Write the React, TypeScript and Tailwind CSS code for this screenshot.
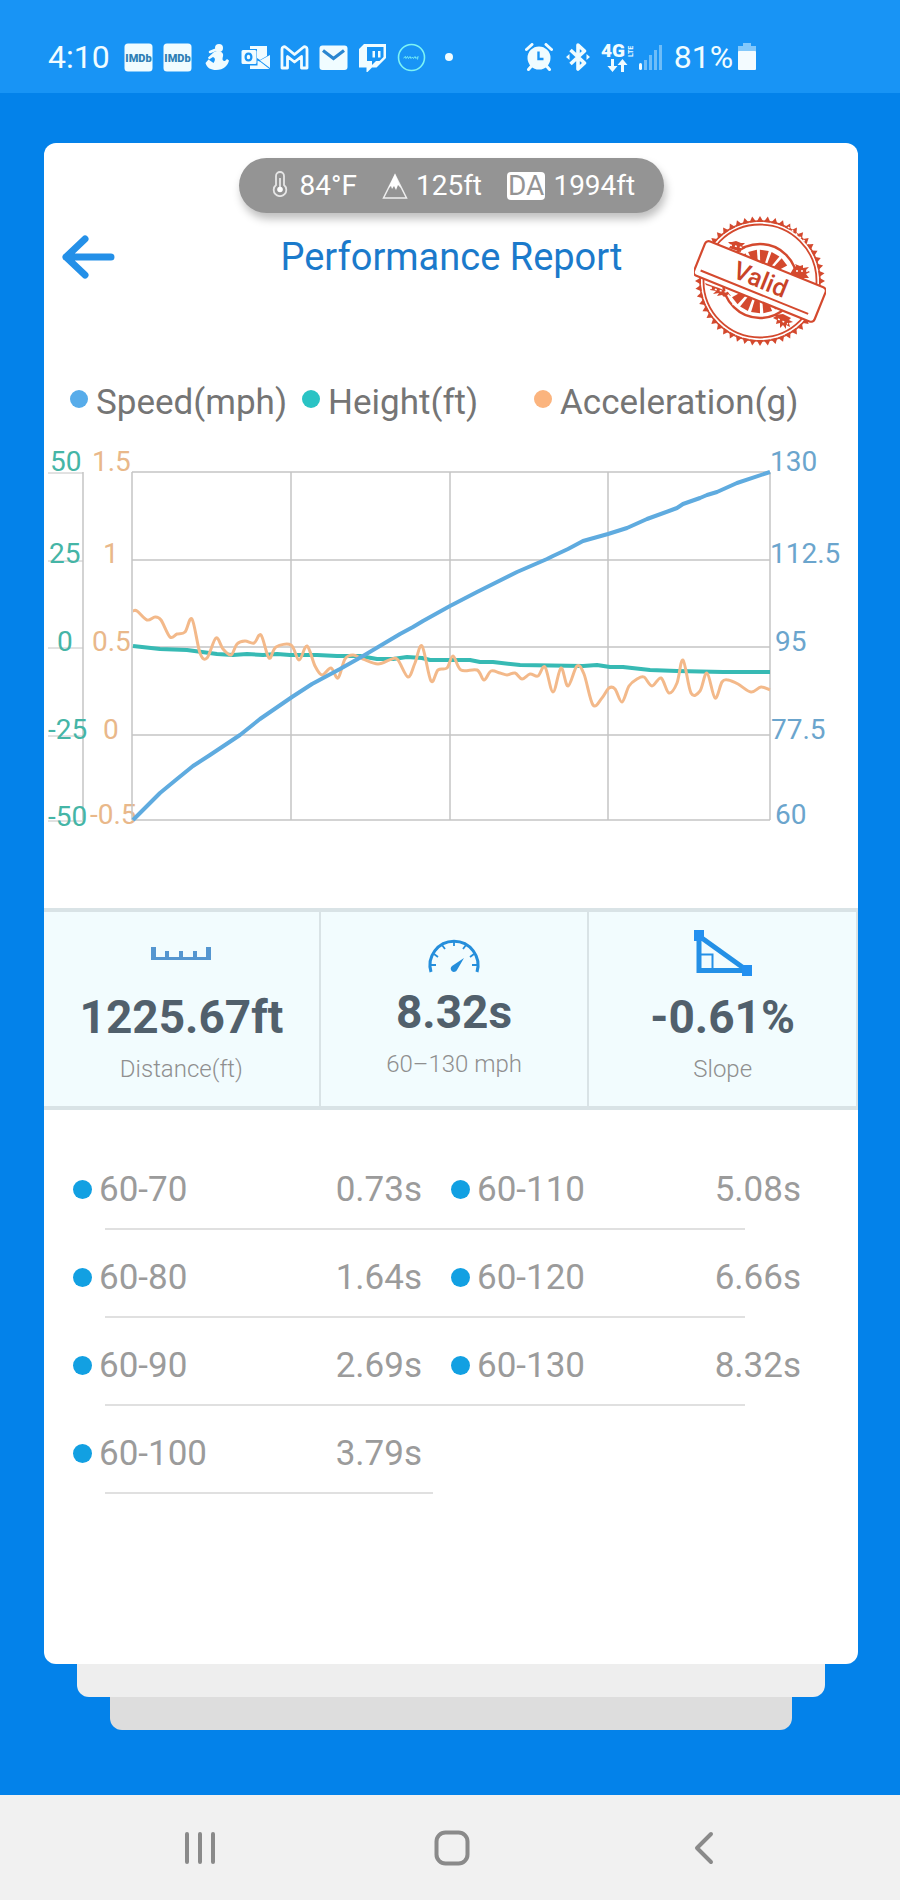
import type { ReactNode } from "react";

type Point = [number, number];

// Plot area is 638 x 348, all series are in plot coordinates
const speed: Point[] = [
  [1, 348], [28, 321], [45, 307], [61, 294], [78, 283], [108, 263], [128, 247], [160, 225],
  [180, 212], [208, 197], [231, 184], [268, 162], [281, 155], [291, 149], [318, 134], [345, 120],
  [385, 100], [415, 87], [421, 84], [436, 77], [451, 69], [476, 62], [495, 56], [515, 47],
  [545, 36], [551, 32], [568, 26], [575, 23], [585, 20], [605, 11], [638, 0],
];

const height: Point[] = [
  [1, 174], [28, 177], [55, 178], [85, 182], [101, 183], [115, 182], [131, 183], [145, 182],
  [158, 183], [185, 183], [205, 184], [228, 184], [245, 187], [261, 187], [275, 185], [290, 186],
  [298, 188], [338, 188], [348, 190], [361, 190], [388, 193], [451, 194], [465, 193], [478, 195],
  [491, 195], [518, 198], [545, 199], [591, 200], [638, 200],
];

const acceleration: Point[] = [
  [1, 139], [5, 139], [15, 148], [23, 145], [29, 148], [38, 165], [45, 162], [53, 160],
  [60, 147], [68, 181], [75, 186], [84, 166], [91, 177], [99, 183], [105, 172], [113, 169],
  [122, 171], [129, 163], [137, 186], [144, 175], [159, 173], [167, 188], [175, 174], [183, 194],
  [190, 203], [199, 196], [206, 206], [213, 187], [221, 183], [231, 187], [246, 192], [260, 187],
  [266, 188], [276, 205], [283, 191], [290, 174], [299, 209], [306, 198], [315, 196], [321, 184],
  [329, 198], [345, 198], [352, 208], [359, 199], [368, 201], [375, 203], [383, 201], [390, 207],
  [398, 202], [406, 204], [413, 195], [421, 220], [429, 196], [436, 214], [445, 194], [452, 202],
  [461, 233], [470, 226], [477, 216], [483, 217], [490, 230], [497, 214], [505, 207], [512, 205],
  [520, 214], [529, 206], [537, 221], [545, 211], [551, 188], [559, 221], [568, 219], [575, 201],
  [583, 226], [590, 210], [596, 208], [606, 212], [619, 220], [629, 215], [638, 218],
];

function smoothPath(points: Point[]) {
  let d = `M${points[0][0]} ${points[0][1]}`;
  for (let i = 0; i < points.length - 1; i++) {
    const p0 = points[i - 1] ?? points[i];
    const p1 = points[i];
    const p2 = points[i + 1];
    const p3 = points[i + 2] ?? p2;
    d += `C${p1[0] + (p2[0] - p0[0]) / 6} ${p1[1] + (p2[1] - p0[1]) / 6} ${
      p2[0] - (p3[0] - p1[0]) / 6
    } ${p2[1] - (p3[1] - p1[1]) / 6} ${p2[0]} ${p2[1]}`;
  }
  return d;
}

function linePath(points: Point[]) {
  return "M" + points.map(([x, y]) => `${x} ${y}`).join("L");
}

const gridRows = [0, 88, 175, 263, 348];
const gridCols = [0, 159, 318, 476, 638];
const labelRows = [30, 122, 210, 298, 383];

const heightTicks = ["50", "25", "0", "-25", "-50"];
const accelTicks = ["1.5", "1", "0.5", "0", "-0.5"];
const speedTicks = ["130", "112.5", "95", "77.5", "60"];
const heightTickX = [6, 5, 13, 4, 4];
const accelTickX = [48, 59, 48, 59, 46];
const speedTickX = [726, 726, 731, 727, 731];

const legend = [
  { label: "Speed(mph)", dot: "bg-[#57acea]" },
  { label: "Height(ft)", dot: "bg-[#2ac3c4]" },
  { label: "Acceleration(g)", dot: "bg-[#fbb47e]" },
];

const splits = [
  [["60-70", "0.73s"], ["60-110", "5.08s"]],
  [["60-80", "1.64s"], ["60-120", "6.66s"]],
  [["60-90", "2.69s"], ["60-130", "8.32s"]],
  [["60-100", "3.79s"]],
];

function ImdbIcon() {
  return (
    <svg viewBox="0 0 29 29" className="size-[29px]">
      <rect x="0.500" y="0.500" width="28" height="28" rx="3.500" fill="currentColor" />
      <text x="14.500" y="18.500" textAnchor="middle" fontSize="11" fontWeight="900" fill="#2f7fb5">
        IMDb
      </text>
    </svg>
  );
}

function StatusBar() {
  return (
    <header className="flex h-[93px] items-center bg-[#1894f5] pt-[21px] pl-12 text-[32px] leading-10 text-[#f0fcff]">
      <span>4:10</span>
      <div className="ml-[14px] flex items-center gap-[10px]">
        <ImdbIcon />
        <ImdbIcon />
        {/* sitting figure */}
        <svg viewBox="0 0 29 29" className="size-[29px]" fill="currentColor">
          <circle cx="17" cy="5" r="4" />
          <path d="M12 9c3-2 8-1 9 2 .5 2-.5 3-.5 5 0 1.500 1 2 2.500 2l2-2 2 1.500C26 22 22 27 14 27 9 27 5 25 3.500 20l3-3.500 5 3.500c1-2 2-3 1-5l-1.500-1-4 2.500-1-2z" />
          <path d="M8 9l5-2" stroke="currentColor" strokeWidth="2.500" strokeLinecap="round" />
        </svg>
        {/* outlook */}
        <svg viewBox="0 0 29 29" className="size-[29px]" fill="currentColor">
          <path d="M9 3h17v10l-7 4-3-2V6H9z" />
          <path d="M19 17.500l10-5.500v13z" />
          <path d="M9 22.500h7.500v-5l3 1.500 9 7H9z" />
          <path
            fillRule="evenodd"
            d="M2 7h12a1.500 1.500 0 0 1 1.500 1.500v11A1.500 1.500 0 0 1 14 21H2a1.500 1.500 0 0 1-1.500-1.500v-11A1.500 1.500 0 0 1 2 7zm5.500 2.500C4.800 9.500 3.500 11.500 3.500 14s1.300 4.500 4 4.500 4-2 4-4.500-1.300-4.500-4-4.500zm0 2.200c1.200 0 1.700 1 1.700 2.300s-.5 2.300-1.700 2.300-1.700-1-1.700-2.300.5-2.300 1.700-2.300z"
          />
        </svg>
        {/* gmail */}
        <svg viewBox="0 0 29 29" className="size-[29px]">
          <path
            d="M2 25V6c0-2 2-3 4-1.500l8.500 7L23 4.500C25 3 27 4 27 6v19h-5.500V13.500l-7 5.500-7-5.500V25z"
            fill="none"
            stroke="currentColor"
            strokeWidth="2.800"
            strokeLinejoin="round"
          />
        </svg>
        {/* mail */}
        <svg viewBox="0 0 29 29" className="size-[29px]">
          <rect x="0.500" y="2.500" width="28" height="24.500" rx="3" fill="currentColor" />
          <path d="M4 7.500l10.500 8L25 7.500" fill="none" stroke="#2a86d0" strokeWidth="3.200" />
        </svg>
        {/* twitch */}
        <svg viewBox="0 0 29 29" className="size-[29px]" fill="currentColor">
          <path
            fillRule="evenodd"
            d="M6 1h22v14l-9.500 9.500H14L8.500 30v-5.500H1V6zm3 3v14h5v4l4-4h3.500l4-4V4z"
          />
          <path d="M14.500 8H17v6.500h-2.500zM20 8h2.500v6.500H20z" />
        </svg>
        <svg viewBox="0 0 29 29" className="size-[29px]" fill="none" stroke="#7df3f4">
          <circle cx="14.500" cy="14.500" r="13" strokeWidth="1.600" />
          <path d="M6.500 15l2-1.500.5 2 1.500-2 1 2 1.500-2 1 2 1.500-1.500 1 1.500 1.500-2 1 2 2-2-.5 3" strokeWidth="0.900" />
        </svg>
        <span className="ml-[9px] size-2 rounded-full bg-[#f0fcff]" />
      </div>

      <div className="ml-[72px] flex items-center">
        {/* alarm clock */}
        <svg viewBox="0 0 28 28" className="size-7" fill="none" stroke="currentColor">
          <path d="M1.500 6.500l5.500-5M26.500 6.500l-5.500-5" strokeWidth="3" strokeLinecap="round" />
          <path d="M6.500 23l-3 3.500M21.500 23l3 3.500" strokeWidth="3" strokeLinecap="round" />
          <circle cx="14" cy="15" r="11.500" fill="currentColor" stroke="none" />
          <path d="M13.500 8.500v7.500h5" stroke="#1894f5" strokeWidth="2.400" />
        </svg>
        {/* bluetooth */}
        <svg viewBox="0 0 24 28" className="ml-[13px] h-7 w-6" fill="none" stroke="currentColor">
          <path d="M4.500 7l14 13L12 26V2l6.500 6-14 13" strokeWidth="3.600" strokeLinejoin="round" />
          <path d="M0 14l3.500-3v6zM24 14l-3.500-3v6z" fill="currentColor" stroke="none" />
        </svg>
        {/* 4G LTE with data arrows */}
        <svg viewBox="0 0 33 30" className="ml-[11px] h-[30px] w-[33px] overflow-visible" fill="currentColor">
          <text x="0" y="15" fontSize="19" fontWeight="900">4G</text>
          <text x="-15" y="32" fontSize="7" fontWeight="700" transform="rotate(-90)">LTE</text>
          <path d="M10 17v7H6.500l5 6 5-6H13v-7zM20 30v-7h-3.500l5-6 5 6H23v7z" />
        </svg>
        <svg viewBox="0 0 24 28" className="ml-[5px] h-7 w-6" fill="#6ebdf8">
          <rect x="0" y="20" width="3" height="7" rx="1.500" fill="#f0fcff" />
          <rect x="5" y="17" width="3" height="10" />
          <rect x="10" y="12" width="3" height="15" />
          <rect x="15" y="7" width="3" height="20" />
          <rect x="20" y="2" width="3" height="25" />
        </svg>
        <span className="ml-[11px]">81%</span>
        <svg viewBox="0 0 18 28" className="ml-[5px] h-7 w-[18px]">
          <path d="M5 0h8v3h5v7H0V3h5z" fill="#82c8fb" />
          <rect x="0" y="8" width="18" height="19" rx="1" fill="#f3fbff" />
        </svg>
      </div>
    </header>
  );
}

function WeatherPill() {
  return (
    <div className="mx-auto mt-[14px] flex h-[55px] w-[425px] items-center rounded-full bg-[#949494] pl-[33px] text-[28px] leading-10 text-white shadow-[2px_6px_8px_rgba(0,0,0,0.25)]">
      <svg viewBox="0 0 16 26" className="mb-1 h-[26px] w-4" fill="none" stroke="#e6e6e6">
        <path d="M4 14V5a4 4 0 0 1 8 0v9a6.300 6.300 0 1 1-8 0z" strokeWidth="1.800" />
        <path d="M8 7v10" strokeWidth="1.800" />
        <circle cx="8" cy="18.500" r="2.800" fill="#fff" stroke="none" />
      </svg>
      <span className="ml-3">84°F</span>
      <svg viewBox="0 0 26 26" className="ml-[25px] h-[26px] w-[26px]">
        <path d="M13 2L1.500 25h23z" fill="none" stroke="#eee" strokeWidth="1.500" />
        <path d="M13 1l6 14-3-3-2 5-2-4-2 3-1-3-2.500 2z" fill="#fff" />
      </svg>
      <span className="ml-2">125ft</span>
      <span className="ml-[25px] rounded-[4px] bg-white px-px leading-7 text-[#949494]">DA</span>
      <span className="ml-2">1994ft</span>
    </div>
  );
}

function ValidStamp() {
  const teeth = Array.from({ length: 52 }, (_, i) => (i * 360) / 52);
  const rays = [-36, -14, 8, 30, 52];
  return (
    <svg viewBox="-66 -66 132 132" className="mt-[2px] size-[132px]" fill="none" stroke="#d4492e">
      {teeth.map((a) => (
        <path key={a} d="M-3.500-59L0-65 3.500-59z" transform={`rotate(${a})`} fill="#d4492e" stroke="none" />
      ))}
      <circle r="60" strokeWidth="1.500" />
      <circle r="56.500" strokeWidth="1.800" />
      <circle r="37" strokeWidth="2.400" />
      <g fill="#d4492e" stroke="none">
        {rays.map((a) => (
          <g key={a}>
            <path d="M-2-16L-4.500-31H4.500L2-16z" transform={`rotate(${a})`} />
            <path d="M-2-16L-4.500-32H4.500L2-16z" transform={`rotate(${a + 180})`} />
          </g>
        ))}
        <path d="M-32-39l4 0 4-1 5 2 4 0-3 3 3 2-4 1 0 3-6-2-6-2 2-3z" />
        <path d="M33-12l3-3-1-2 5 2 3-1 0 3 6-1-3 3 4 2-4 2 3 4-5 0-1 3-5-2-8-5z" />
        <path d="M-55 2l8 3 6 2 9 4 3 4-4-1-3 2-2-2-5 1 2-3-6 1 3-3-6-1 2-3-6-2z" />
        <path d="M14 34l9-1 8 4-2 2 4 2-4 1 1 4-4-2 0 4-3-4-3 3 0-5-4 1 1-4-4-2 3-2z" />
      </g>
      {/* worn spots in the ink */}
      <path
        d="M28-54l20 17M-54 40l12 12M-30-36l14 3M36-10l14 0M-50 7l20 5M18 38l10 5M-34 9l8 16"
        stroke="#fff"
        strokeWidth="1.500"
        strokeDasharray="2 3"
      />
      <g transform="rotate(22)">
        <rect x="-65" y="-18" width="130" height="37" rx="4" fill="#fff" strokeWidth="2.200" />
        <path d="M-59 12.500H57" strokeWidth="2" />
        <text
          x="0"
          y="7"
          textAnchor="middle"
          fill="#c94328"
          stroke="none"
          fontSize="25"
          fontWeight="500"
        >
          Valid
        </text>
      </g>
    </svg>
  );
}

function Chart() {
  return (
    <svg viewBox="0 0 814 400" className="mt-[14px] w-full" fontSize="28" fill="none">
      <g stroke="#c4c4c4">
        <path d="M39 31V379" strokeWidth="1.500" />
        {gridRows.map((y) => (
          <path key={y} d={`M4 ${y + 32}H39`} strokeWidth="1" />
        ))}
      </g>
      <g fill="#45b5a6">
        {heightTicks.map((t, i) => (
          <text key={t} x={heightTickX[i]} y={i === 4 ? 385 : labelRows[i]}>{t}</text>
        ))}
      </g>
      <g fill="#e9b88a">
        {accelTicks.map((t, i) => (
          <text key={t} x={accelTickX[i]} y={labelRows[i]}>{t}</text>
        ))}
      </g>
      <g fill="#6ba5cd">
        {speedTicks.map((t, i) => (
          <text key={t} x={speedTickX[i]} y={labelRows[i]}>{t}</text>
        ))}
      </g>
      <g transform="translate(88 31)">
        <g stroke="#c4c4c4" strokeWidth="1.500">
          {gridRows.map((y) => (
            <path key={y} d={`M0 ${y}H638`} />
          ))}
          {gridCols.map((x) => (
            <path key={x} d={`M${x} 0V348`} />
          ))}
        </g>
        <path d={linePath(height)} stroke="#37bab4" strokeWidth="4" strokeLinejoin="round" />
        <path d={smoothPath(acceleration)} stroke="#f3b98a" strokeWidth="3" />
        <path d={linePath(speed)} stroke="#5fabdf" strokeWidth="4" strokeLinejoin="round" />
      </g>
    </svg>
  );
}

function Stat({ icon, value, label }: { icon: ReactNode; value: string; label: string }) {
  return (
    <div className="flex flex-col items-center border-r-2 border-[#d9e3e6] pt-[18px] pb-[21px]">
      {icon}
      <p className="mt-[13px] text-[46px] leading-[56px] font-bold text-[#51606c]">{value}</p>
      <p className="mt-2 text-[24px] leading-8 font-light text-[#8f8f8f]">{label}</p>
    </div>
  );
}

function Stats() {
  return (
    <section className="mt-[67px] grid grid-cols-[34%_33%_33%] border-y-4 border-[#d9e3e6] bg-[#f2fcfe]">
      <Stat
        value="1225.67ft"
        label="Distance(ft)"
        icon={
          <svg viewBox="0 0 62 46" className="h-[46px] w-[62px]" fill="#5596d0">
            <path d="M1 17h5v10h9v-6h4v6h10v-6h4v6h10v-6h4v6h9V17h5v13H1z" />
          </svg>
        }
      />
      <Stat
        value="8.32s"
        label="60–130 mph"
        icon={
          <svg viewBox="0 0 62 41" className="h-[41px] w-[62px] overflow-visible" fill="none" stroke="#258edb">
            <path d="M8 42a24 24 0 1 1 46 0" strokeWidth="3" />
            <path
              d="M8 35h5M11 24l4 3M19 15l3 4M31 11v5M43 15l-3 4M51 24l-4 3M54 35h-5"
              strokeWidth="1.800"
            />
            <path d="M41 28l-7 12a3.300 3.300 0 1 1-5-4z" fill="#258edb" stroke="none" />
          </svg>
        }
      />
      <Stat
        value="-0.61%"
        label="Slope"
        icon={
          <svg viewBox="0 0 58 46" className="h-[46px] w-[58px]" fill="none" stroke="#2490e6">
            <path d="M5 6v34.500H50" strokeWidth="5" />
            <path d="M5 6l46 33" strokeWidth="5" />
            <path d="M7 24.500h11.500V40" strokeWidth="2" />
            <path d="M0 0h10v11H0zM48 35h10v11H48z" fill="#2490f0" stroke="none" />
          </svg>
        }
      />
    </section>
  );
}

function SplitCells({ range, time, first }: { range: string; time: string; first: boolean }) {
  return (
    <>
      <th
        scope="row"
        className={`relative pt-2 font-normal after:absolute after:right-0 after:bottom-0 after:h-[2px] after:bg-[#e0e0e0] ${
          first ? "w-[180px] after:left-8" : "pl-[18px] after:left-0"
        }`}
      >
        <span className="flex items-center gap-[7px]">
          <span className="mb-[2px] size-[19px] rounded-full bg-[#12a0e2]" />
          {range}
        </span>
      </th>
      <td
        className={`relative pt-2 text-right after:absolute after:bottom-0 after:left-0 after:h-[2px] after:bg-[#e0e0e0] ${
          first ? "w-[180px] pr-[11px] after:right-0" : "after:right-14"
        }`}
      >
        {time}
      </td>
    </>
  );
}

export default function App() {
  return (
    <div className="flex min-h-screen flex-col bg-[#0382ea] font-['Roboto',sans-serif]">
      <StatusBar />

      <main className="flex flex-1 flex-col pt-[50px] pr-[42px] pb-[65px] pl-11">
        <div className="flex-1 rounded-xl bg-white">
          <div className="pt-px">
            <WeatherPill />
          </div>

          <div className="grid grid-cols-[1fr_auto_1fr] items-start pr-8 pl-[17px]">
            <button type="button" aria-label="Back" className="mt-[22px] w-[54px]">
              <svg
                viewBox="0 0 54 44"
                className="h-11 w-[54px]"
                fill="none"
                stroke="#2490e8"
                strokeWidth="7"
                strokeLinecap="round"
                strokeLinejoin="round"
              >
                <path d="M24 4L5 22l19 18M5 22H50" />
              </svg>
            </button>
            <h1 className="mt-5 ml-4 text-[38px] leading-[48px] text-[#1b7acb]">Performance Report</h1>
            <div className="flex justify-end">
              <ValidStamp />
            </div>
          </div>

          <ul className="mt-8 grid grid-cols-3 pr-[92px] pl-[26px] text-[35px] leading-[48px] text-[#757575]">
            {legend.map((item) => (
              <li key={item.label} className="flex items-center gap-2 whitespace-nowrap">
                <span className={`mb-2 size-[18px] shrink-0 rounded-full ${item.dot}`} />
                {item.label}
              </li>
            ))}
          </ul>

          <Chart />
          <Stats />

          <div className="mt-8 pr-[57px] pl-[29px]">
            <table className="w-full table-fixed text-[35px] leading-[48px] text-[#9b9b9b]">
              <tbody>
                {splits.map((row) => (
                  <tr key={row[0][0]} className="h-[88px]">
                    {row.map(([range, time], i) => (
                      <SplitCells key={range} range={range} time={time} first={i === 0} />
                    ))}
                  </tr>
                ))}
              </tbody>
            </table>
          </div>
        </div>
        <div className="mx-[33px] h-[33px] rounded-b-xl bg-[#eee]" />
        <div className="mx-[66px] h-[33px] rounded-b-xl bg-[#ddd]" />
      </main>

      <nav className="grid h-[105px] grid-cols-3 items-center justify-items-center bg-[#f1f1f1] pr-[70px] pl-[74px] text-[#8a8a8a]">
        <button type="button" aria-label="Recent apps">
          <svg viewBox="0 0 32 34" className="h-[34px] w-8" stroke="currentColor" strokeWidth="4" strokeLinecap="round">
            <path d="M3 3v28M16 3v28M29 3v28" />
          </svg>
        </button>
        <button type="button" aria-label="Home">
          <svg viewBox="0 0 36 36" className="size-9" fill="none" stroke="currentColor" strokeWidth="4">
            <rect x="2.500" y="2.500" width="31" height="31" rx="9" />
          </svg>
        </button>
        <button type="button" aria-label="Go back">
          <svg
            viewBox="0 0 20 34"
            className="h-[34px] w-5"
            fill="none"
            stroke="currentColor"
            strokeWidth="4"
            strokeLinecap="round"
            strokeLinejoin="round"
          >
            <path d="M17 3L3 17l14 14" />
          </svg>
        </button>
      </nav>
    </div>
  );
}
